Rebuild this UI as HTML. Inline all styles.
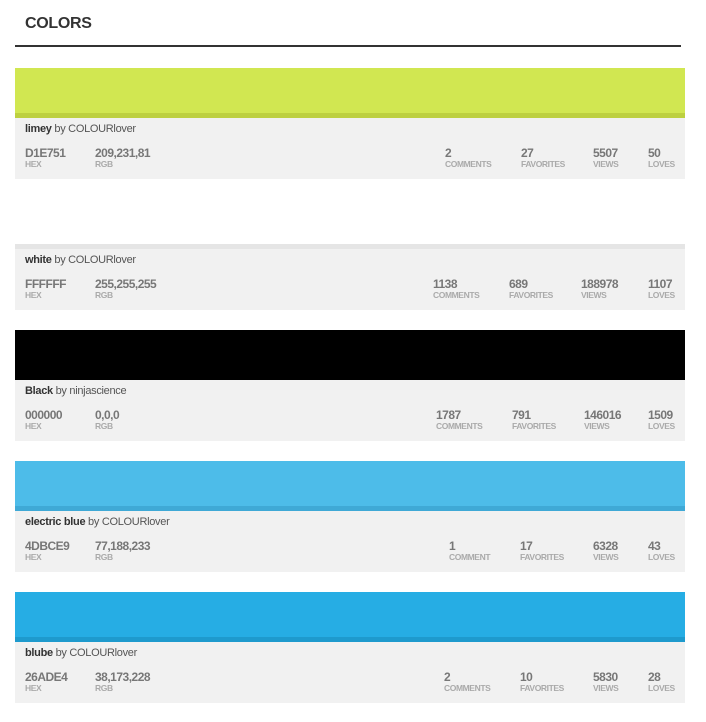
<!DOCTYPE html>
<html><head><style>
body{margin:0;background:#fff;font-family:"Liberation Sans",sans-serif;width:706px;height:722px;position:relative;overflow:hidden}
h2{position:absolute;left:25px;top:15px;margin:0;font-size:16px;font-weight:bold;color:#333;letter-spacing:-0.3px}
.rule{position:absolute;left:15px;top:45px;width:666px;height:2px;background:#333}
.card{position:absolute;left:15px;width:670px;height:111px;background:#f1f1f1}
.sw{position:absolute;left:0;top:0;width:670px;height:45px}
.st{position:absolute;left:0;top:45px;width:670px;height:5px}
.name{position:absolute;left:10px;top:55px;font-size:11px;color:#555;letter-spacing:-0.3px}
.name b{color:#333}
.s{position:absolute;top:78px}
.v{font-size:12px;font-weight:bold;color:#777;letter-spacing:-0.5px;line-height:14px}
.l{font-size:8.5px;font-weight:bold;color:#aaa;letter-spacing:-0.4px;line-height:9px}
</style></head><body>
<h2>COLORS</h2><div class="rule"></div>

<div class="card" style="top:68px"><div class="sw" style="background:#d1e751"></div><div class="st" style="background:#bdd040"></div>
<div class="name"><b>limey</b> by COLOURlover</div>
<div class="s" style="left:10px"><div class="v">D1E751</div><div class="l">HEX</div></div>
<div class="s" style="left:80px"><div class="v">209,231,81</div><div class="l">RGB</div></div>
<div class="s" style="left:430px"><div class="v">2</div><div class="l">COMMENTS</div></div>
<div class="s" style="left:506px"><div class="v">27</div><div class="l">FAVORITES</div></div>
<div class="s" style="left:578px"><div class="v">5507</div><div class="l">VIEWS</div></div>
<div class="s" style="left:633px"><div class="v">50</div><div class="l">LOVES</div></div></div>

<div class="card" style="top:199px"><div class="sw" style="background:#fff"></div><div class="st" style="background:#e5e5e5"></div>
<div class="name"><b>white</b> by COLOURlover</div>
<div class="s" style="left:10px"><div class="v">FFFFFF</div><div class="l">HEX</div></div>
<div class="s" style="left:80px"><div class="v">255,255,255</div><div class="l">RGB</div></div>
<div class="s" style="left:418px"><div class="v">1138</div><div class="l">COMMENTS</div></div>
<div class="s" style="left:494px"><div class="v">689</div><div class="l">FAVORITES</div></div>
<div class="s" style="left:566px"><div class="v">188978</div><div class="l">VIEWS</div></div>
<div class="s" style="left:633px"><div class="v">1107</div><div class="l">LOVES</div></div></div>

<div class="card" style="top:330px"><div class="sw" style="background:#000"></div><div class="st" style="background:#000"></div>
<div class="name"><b>Black</b> by ninjascience</div>
<div class="s" style="left:10px"><div class="v">000000</div><div class="l">HEX</div></div>
<div class="s" style="left:80px"><div class="v">0,0,0</div><div class="l">RGB</div></div>
<div class="s" style="left:421px"><div class="v">1787</div><div class="l">COMMENTS</div></div>
<div class="s" style="left:497px"><div class="v">791</div><div class="l">FAVORITES</div></div>
<div class="s" style="left:569px"><div class="v">146016</div><div class="l">VIEWS</div></div>
<div class="s" style="left:633px"><div class="v">1509</div><div class="l">LOVES</div></div></div>

<div class="card" style="top:461px"><div class="sw" style="background:#4dbce9"></div><div class="st" style="background:#3fa9d6"></div>
<div class="name"><b>electric blue</b> by COLOURlover</div>
<div class="s" style="left:10px"><div class="v">4DBCE9</div><div class="l">HEX</div></div>
<div class="s" style="left:80px"><div class="v">77,188,233</div><div class="l">RGB</div></div>
<div class="s" style="left:434px"><div class="v">1</div><div class="l">COMMENT</div></div>
<div class="s" style="left:505px"><div class="v">17</div><div class="l">FAVORITES</div></div>
<div class="s" style="left:578px"><div class="v">6328</div><div class="l">VIEWS</div></div>
<div class="s" style="left:633px"><div class="v">43</div><div class="l">LOVES</div></div></div>

<div class="card" style="top:592px"><div class="sw" style="background:#26ade4"></div><div class="st" style="background:#1e9acd"></div>
<div class="name"><b>blube</b> by COLOURlover</div>
<div class="s" style="left:10px"><div class="v">26ADE4</div><div class="l">HEX</div></div>
<div class="s" style="left:80px"><div class="v">38,173,228</div><div class="l">RGB</div></div>
<div class="s" style="left:429px"><div class="v">2</div><div class="l">COMMENTS</div></div>
<div class="s" style="left:505px"><div class="v">10</div><div class="l">FAVORITES</div></div>
<div class="s" style="left:578px"><div class="v">5830</div><div class="l">VIEWS</div></div>
<div class="s" style="left:633px"><div class="v">28</div><div class="l">LOVES</div></div></div>
</body></html>
